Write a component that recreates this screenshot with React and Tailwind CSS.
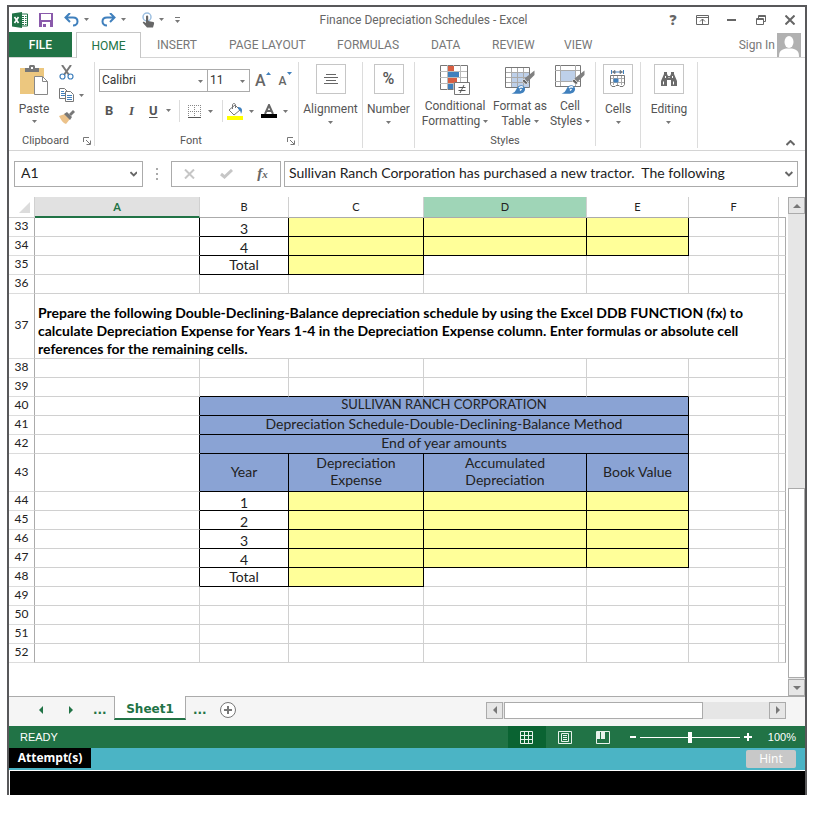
import { useState } from 'react';

const COLUMNS = [
  { name: 'A', width: '' },
  { name: 'B', width: 'w-[89px]' },
  { name: 'C', width: 'w-[135px]' },
  { name: 'D', width: 'w-[163px]' },
  { name: 'E', width: 'w-[102px]' },
  { name: 'F', width: 'w-[90px]' },
];

const INSTRUCTIONS =
  'Prepare the following Double-Declining-Balance depreciation schedule by using the Excel DDB FUNCTION (fx) to calculate Depreciation Expense for Years 1-4 in the Depreciation Expense column. Enter formulas or absolute cell references for the remaining cells.';

const ROWS = [
  { n: 33, kind: 'year', label: '3' },
  { n: 34, kind: 'year', label: '4' },
  { n: 35, kind: 'total' },
  { n: 36, kind: 'blank' },
  { n: 37, kind: 'note' },
  { n: 38, kind: 'blank' },
  { n: 39, kind: 'blank', aboveTable: true },
  { n: 40, kind: 'title', label: 'SULLIVAN RANCH CORPORATION' },
  { n: 41, kind: 'title', label: 'Depreciation Schedule-Double-Declining-Balance Method' },
  { n: 42, kind: 'title', label: 'End of year amounts' },
  { n: 43, kind: 'head' },
  { n: 44, kind: 'year', label: '1' },
  { n: 45, kind: 'year', label: '2' },
  { n: 46, kind: 'year', label: '3' },
  { n: 47, kind: 'year', label: '4' },
  { n: 48, kind: 'total' },
  { n: 49, kind: 'blank' },
  { n: 50, kind: 'blank' },
  { n: 51, kind: 'blank' },
  { n: 52, kind: 'blank' },
];

const plain = 'border-r border-b border-[#d0d0d0] p-0';
const black = 'border-r border-b border-black px-0 text-center';
const beforeTable = 'border-r border-b border-r-black border-b-[#d0d0d0] p-0';

function Caret({ className = '' }) {
  return (
    <svg viewBox="0 0 5 3" className={`h-[3px] w-[5px] shrink-0 fill-[#777] ${className}`}>
      <path d="M0 0h5L2.500 3z" />
    </svg>
  );
}

function Launcher() {
  return (
    <button aria-label="More options">
      <svg width="8" height="8" viewBox="0 0 8 8" fill="none" stroke="#777">
        <path d="M.5 5V.5H6M3 3l4 4M7.500 3.500v4h-4" />
      </svg>
    </button>
  );
}

function ExcelLogo() {
  return (
    <svg width="16" height="16" viewBox="0 0 16 16">
      <path d="M9 2h6.500v12H9z" fill="#fff" stroke="#217346" />
      <path d="M10 4.500h2M13 4.500h1.500M10 6.500h2M13 6.500h1.500M10 8.500h2M13 8.500h1.500M10 10.500h2M13 10.500h1.500M10 12.500h2M13 12.500h1.500" stroke="#217346" />
      <path d="M0 1.500 10 0v16L0 14.500z" fill="#217346" />
      <path d="m2.500 5 4 6M6.500 5l-4 6" stroke="#fff" strokeWidth="1.600" />
    </svg>
  );
}

function SaveIcon() {
  return (
    <svg width="14" height="14" viewBox="0 0 14 14">
      <path d="M0 0h14v14H0z" fill="#8a5aab" />
      <path d="M2 1h10v6H2zM3 9h8v5H3z" fill="#fff" />
      <path d="M4 11h3v3H4z" fill="#8a5aab" />
    </svg>
  );
}

function ArrowIcon({ flip }) {
  return (
    <svg width="15" height="14" viewBox="0 0 15 14" fill="none" stroke="#4080bd" strokeWidth="2" className={flip ? '-scale-x-100' : ''}>
      <path d="M6 0 1.500 4.500 6 9M2 4.500h7c3.500 0 4.500 2 4.500 4s-1.500 4-4.500 4" />
    </svg>
  );
}

function TouchIcon() {
  return (
    <svg width="13" height="16" viewBox="0 0 13 16">
      <circle cx="5" cy="5" r="4" fill="none" stroke="#9dbfe0" strokeWidth="1.500" />
      <path d="M4 4.500a1 1 0 0 1 2.200 0V9l5 1c1 .3 1 1 .8 2l-1 3.500H5L1 11c-.6-1 .3-1.700 1-1.200L4 11z" fill="#666" />
    </svg>
  );
}

function PasteIcon() {
  return (
    <svg width="29" height="31" viewBox="0 0 29 31">
      <path d="M0 3h24v26H0z" fill="#ecc77f" />
      <path d="M5 3h4V1.500C9 .7 9.700 0 10.500 0h3c.8 0 1.500.7 1.500 1.500V3h4v4H5z" fill="#777" />
      <path d="M11 2h2v2h-2z" fill="#fff" />
      <path d="M14.500 11.500h8l5 5v13h-13z" fill="#fff" stroke="#888" />
      <path d="M22.500 11.500v5h5" fill="none" stroke="#888" />
    </svg>
  );
}

function CutIcon() {
  return (
    <svg width="15" height="15" viewBox="0 0 15 15" fill="none">
      <path d="m3 0 7 10M12 0 5 10" stroke="#777" strokeWidth="2" />
      <circle cx="3.500" cy="11.500" r="2.500" stroke="#4080bd" strokeWidth="1.200" />
      <circle cx="11.500" cy="11.500" r="2.500" stroke="#4080bd" strokeWidth="1.200" />
    </svg>
  );
}

function CopyIcon() {
  return (
    <svg width="16" height="14" viewBox="0 0 16 14" fill="#fff" stroke="#777">
      <path d="M.5.5h5l3 3v7h-8z" />
      <path d="M2 3.500h3M2 5.500h5M2 7.500h5" stroke="#4080bd" />
      <path d="M6.500 3.500h5l3 3v7h-8z" />
      <path d="M8 7.500h5M8 9.500h5M8 11.500h5" stroke="#4080bd" />
    </svg>
  );
}

function BrushIcon() {
  return (
    <svg width="16" height="14" viewBox="0 0 16 14">
      <path d="m0 6 6-2 5 5-4 5c-3-1-5-4-7-8z" fill="#ecc28a" />
      <path d="m5 4 3-2 5 5-2 3z" fill="#777" />
      <path d="m10 4 4-4 2 2-4 4z" fill="#777" />
    </svg>
  );
}

function BordersIcon() {
  return (
    <svg width="13" height="13" viewBox="0 0 13 13" fill="none" stroke="#888">
      <path d="M0 .5h13M.5 0v13M12.500 0v13M6.500 0v13M0 6.500h13" strokeDasharray="1 1" />
      <path d="M0 12.500h13" stroke="#555" />
    </svg>
  );
}

function FillIcon() {
  return (
    <svg width="16" height="17" viewBox="0 0 16 17">
      <path d="m2 7 6-5 5 5-6 5z" fill="#fff" stroke="#777" />
      <path d="M5.500 6V2c0-2 3-2 3 0v3" fill="none" stroke="#777" />
      <path d="M11 4c4 0 5 3 3 7-.5-3-1-4-3-5z" fill="#4080bd" />
      <path d="M0 13h16v4H0z" fill="#ff0" />
    </svg>
  );
}

function FontColorIcon() {
  return (
    <svg width="16" height="14" viewBox="0 0 16 14">
      <path d="M4 10 8 1l4 9M5.500 7h5" fill="none" stroke="#666" strokeWidth="2" />
      <path d="M0 10h16v4H0z" />
    </svg>
  );
}

function ConditionalIcon() {
  return (
    <svg width="30" height="30" viewBox="0 0 30 30">
      <path d="M.5.5h27v24H.5z" fill="#fff" stroke="#777" />
      <path d="M0 6.500h27M0 12.500h27M0 18.500h27M7.500 0v25M13.500 0v25M20.500 0v25" stroke="#bbb" />
      <path d="M8 1h6v5H8zM8 13h9v5H8z" fill="#d75f43" />
      <path d="M8 7h11v5H8zM8 19h5v5H8z" fill="#4080bd" />
      <path d="M14.500 17.500h15v12h-15z" fill="#fff" stroke="#777" />
      <path d="M18.500 22.500h7M18.500 25.500h7M24 20l-4 8" stroke="#555" fill="none" />
    </svg>
  );
}

function PaintBrush() {
  return (
    <>
      <path d="M29.500 5.500V10l-7 7-3-3.500z" fill="#808080" />
      <path d="m19 14 4 4-2 1.500-4-3.500z" fill="#666" stroke="#fff" strokeWidth=".6" />
      <path d="M6.500 28.500c4-1 4-3 5.500-5.500 1.500-3 5-3.500 7-1.500s1 5-1 6.200c-3 1.500-7 1.300-11.500.8z" fill="#4080bd" />
      <path d="M14 23c1.500-2 3-1.500 4-.5M15 25.500l1.500-1.500" stroke="#fff" strokeWidth="1.500" fill="none" />
    </>
  );
}

function FormatTableIcon() {
  return (
    <svg width="30" height="30" viewBox="0 0 30 30">
      <path d="M.5 2.500h24v20H.5z" fill="#fff" />
      <path d="M7 8h17v14H7z" fill="#bed0e9" />
      <path d="M0 7.500h24M0 12.500h24M0 17.500h24M6.500 2v20M12.500 2v20M18.500 2v20" stroke="#aaa" />
      <path d="M.5 2.500h24v20H.5z" fill="none" stroke="#777" />
      <PaintBrush />
    </svg>
  );
}

function CellStylesIcon() {
  return (
    <svg width="30" height="30" viewBox="0 0 30 30">
      <path d="M.5.5h25v21H.5z" fill="#fff" stroke="#777" />
      <path d="M6 6h14v10H6z" fill="#bed0e9" />
      <path d="M0 5.500h25M0 16.500h25M5.500 0v21M20.500 0v21" stroke="#aaa" />
      <PaintBrush />
    </svg>
  );
}

function CellsIcon() {
  return (
    <svg width="16" height="18" viewBox="0 0 16 18" fill="none" stroke="#777">
      <path d="M1.500 0v4M13.500 0v4M4 2h7" stroke="#4080bd" />
      <path d="M2.500 2 5 .5v3zM12.500 2 10 .5v3z" fill="#4080bd" />
      <path d="M.5 5.500h14v9l-1.500 2h-3l-1-1h-3l-1 1H2l-1.500-2z" />
      <path d="M1 8.500h13M1 12.500h13M3.500 6v9M11.500 6v9M7.500 6v9" stroke="#aaa" />
      <path d="M4 9h4v3H4z" fill="#4080bd" stroke="#4080bd" />
    </svg>
  );
}

function BinocularsIcon() {
  return (
    <svg width="16" height="14" viewBox="0 0 16 14">
      <path d="M3 2V0h3v2l1 2h2l1-2V0h3v2l3 7v5h-6V8H6v6H0V9z" fill="#6b6b6b" />
      <path d="M2.500 9.500v3M12.500 9.500v3M4.500 4v2M11.500 4v2M7.500 5.500h1" stroke="#fff" />
    </svg>
  );
}

function WindowControls() {
  return (
    <div className="flex items-center text-[#666]">
      <button className="w-3 font-['Open_Sans',sans-serif] text-sm font-extrabold leading-4" aria-label="Help">?</button>
      <button className="ml-[17px]" aria-label="Ribbon display options">
        <svg width="13" height="10" viewBox="0 0 13 10" fill="none" stroke="currentColor">
          <path d="M.5.5h12v9H.5zM0 2.500h13M6.500 9V4M4 6.500 6.500 4 9 6.500" />
        </svg>
      </button>
      <button className="ml-[18px] h-4" aria-label="Minimize">
        <svg width="9" height="2" viewBox="0 0 9 2" fill="currentColor"><path d="M0 0h9v2H0z" /></svg>
      </button>
      <button className="ml-5" aria-label="Restore">
        <svg width="10" height="10" viewBox="0 0 10 10" fill="none" stroke="currentColor">
          <path d="M2.500 3V.5h7v6H7M2 1.500h8M.5 3.500h7v6h-7zM0 4.500h8" />
        </svg>
      </button>
      <button className="ml-[19px]" aria-label="Close">
        <svg width="10" height="10" viewBox="0 0 10 10" fill="none" stroke="currentColor" strokeWidth="2">
          <path d="m.5.5 9 9M9.500.5l-9 9" />
        </svg>
      </button>
    </div>
  );
}

function TitleBar() {
  return (
    <div className="flex h-[25px] items-center pl-[3px] pr-[10px]">
      <div className="flex items-center">
        <ExcelLogo />
        <button className="ml-[11px]" aria-label="Save"><SaveIcon /></button>
        <button className="ml-[11px] flex items-center gap-[5px]" aria-label="Undo"><ArrowIcon /><Caret /></button>
        <button className="ml-3 flex items-center gap-[5px]" aria-label="Redo"><ArrowIcon flip /><Caret /></button>
        <button className="ml-4 flex items-center gap-1" aria-label="Touch mode"><TouchIcon /><Caret /></button>
        <button className="ml-[11px] flex flex-col items-center gap-[2px]" aria-label="Customize toolbar">
          <span className="h-px w-[5px] bg-[#777]" />
          <Caret />
        </button>
      </div>
      <h1 className="flex-1 text-center text-xs text-[#666]">Finance Depreciation Schedules - Excel</h1>
      <WindowControls />
    </div>
  );
}

function Tabs() {
  return (
    <nav className="flex h-[26px] items-end border-b border-[#d4d4d4] text-xs text-[#777]">
      <a href="#file" className="flex h-[25px] w-[63px] items-center justify-center bg-[#217346] font-medium text-white">FILE</a>
      <a href="#home" className="-mb-px ml-1 flex h-[26px] w-[65px] items-center justify-center border border-b-0 border-[#c6c6c6] bg-white text-[#217346]">HOME</a>
      <div className="flex h-[25px] flex-1 items-center pl-4">
        <a href="#insert" className="w-[72px]">INSERT</a>
        <a href="#layout" className="w-[108px]">PAGE LAYOUT</a>
        <a href="#formulas" className="w-[94px]">FORMULAS</a>
        <a href="#data" className="w-[61px]">DATA</a>
        <a href="#review" className="w-[72px]">REVIEW</a>
        <a href="#view">VIEW</a>
      </div>
      <a href="#signin" className="mr-1 flex h-[25px] items-center gap-[2px]">
        Sign In
        <svg width="24" height="24" viewBox="0 0 24 24">
          <path d="M0 0h24v24H0z" fill="#b1b1b1" />
          <ellipse cx="12" cy="9" rx="4.500" ry="6" fill="#fff" />
          <path d="M2 24c0-6 2-7 7-8.500h6c5 1.500 7 2.500 7 8.500z" fill="#fff" />
        </svg>
      </a>
    </nav>
  );
}

function SmallGroup({ label, width, children }) {
  return (
    <section className={`flex h-[86px] flex-col items-center border-r border-[#dcdcdc] pt-[2px] ${width}`}>
      <button className="flex flex-col items-center">
        <span className="flex h-[30px] w-[30px] items-center justify-center border border-[#c6c6c6]">{children}</span>
        <span className="mt-[7px] leading-4">{label}</span>
        <Caret className="mt-1" />
      </button>
    </section>
  );
}

function StyleButton({ width, lines, children }) {
  return (
    <button className={`flex flex-col items-center leading-[15px] ${width}`}>
      <span className="mb-1 block">{children}</span>
      <span>{lines[0]}</span>
      <span className="flex items-center gap-[3px]">{lines[1]}<Caret /></span>
    </button>
  );
}

function Ribbon() {
  return (
    <div className="flex h-[93px] border-b border-[#d4d4d4] pt-1 text-xs text-[#555]">
      <section className="flex h-[84px] w-[86px] flex-col border-r border-[#dcdcdc] pt-[3px]">
        <div className="flex">
          <button className="flex w-[50px] flex-col items-center">
            <PasteIcon />
            <span className="mt-[5px] leading-4">Paste</span>
            <Caret className="mt-[3px]" />
          </button>
          <div className="flex flex-col gap-2">
            <button className="w-4" aria-label="Cut"><CutIcon /></button>
            <button className="flex items-center gap-1" aria-label="Copy"><CopyIcon /><Caret /></button>
            <button className="w-4" aria-label="Format painter"><BrushIcon /></button>
          </div>
        </div>
        <div className="mt-auto flex items-center justify-between pl-[13px] pr-[3px] text-[11px] leading-[10px]">
          Clipboard
          <Launcher />
        </div>
      </section>

      <section className="flex h-[84px] w-[204px] flex-col border-r border-[#dcdcdc] pl-1 pr-[3px] pt-[7px]">
        <div className="flex items-center text-xs text-[#333]">
          <label className="relative flex h-[23px] w-[109px] border border-[#ababab]">
            <select aria-label="Font" className="w-full appearance-none px-[2px] pb-[2px]"><option>Calibri</option></select>
            <Caret className="pointer-events-none absolute right-1 top-[10px]" />
          </label>
          <label className="relative -ml-px flex h-[23px] w-[43px] border border-[#ababab]">
            <select aria-label="Font size" className="w-full appearance-none px-[2px] pb-[2px]"><option>11</option></select>
            <Caret className="pointer-events-none absolute right-1 top-[10px]" />
          </label>
          <button className="ml-[5px] flex text-base font-medium leading-5 text-[#666]" aria-label="Grow font">
            A<Caret className="mt-px rotate-180 fill-[#4080bd]" />
          </button>
          <button className="ml-2 flex text-xs font-medium leading-5 text-[#666]" aria-label="Shrink font">
            A<Caret className="mt-px fill-[#4080bd]" />
          </button>
        </div>
        <div className="mt-2 flex h-[22px] items-center pl-[6px] text-[13px] text-[#555]">
          <button className="w-[22px] text-left font-bold">B</button>
          <button className="w-[22px] pl-[2px] text-left font-['Liberation_Serif',serif] font-bold italic">I</button>
          <button className="flex items-center gap-2 font-bold"><span className="underline underline-offset-2">U</span><Caret /></button>
          <span className="mx-2 h-full w-px bg-[#dcdcdc]" />
          <button className="flex items-center gap-[7px]" aria-label="Borders"><BordersIcon /><Caret /></button>
          <span className="ml-[9px] mr-1 h-full w-px bg-[#dcdcdc]" />
          <button className="flex items-center gap-[6px]" aria-label="Fill color"><FillIcon /><Caret /></button>
          <button className="ml-[7px] flex items-center gap-[6px]" aria-label="Font color"><FontColorIcon /><Caret /></button>
        </div>
        <div className="mt-auto flex items-center text-[11px] leading-[10px]">
          <span className="flex-1 pr-1 text-center">Font</span>
          <Launcher />
        </div>
      </section>

      <SmallGroup label="Alignment" width="w-16">
        <svg width="14" height="11" viewBox="0 0 14 11" stroke="#666">
          <path d="M2 .5h10M0 3.500h14M2 6.500h10M0 9.500h14" />
        </svg>
      </SmallGroup>
      <SmallGroup label="Number" width="w-[52px]"><span className="text-base font-medium">%</span></SmallGroup>

      <section className="flex h-[84px] w-[181px] flex-col border-r border-[#dcdcdc] pt-[3px]">
        <div className="flex pl-1">
          <StyleButton width="w-[72px]" lines={['Conditional', 'Formatting']}><ConditionalIcon /></StyleButton>
          <StyleButton width="w-[58px]" lines={['Format as', 'Table']}><FormatTableIcon /></StyleButton>
          <StyleButton width="w-[42px]" lines={['Cell', 'Styles']}><CellStylesIcon /></StyleButton>
        </div>
        <span className="mt-auto text-center text-[11px] leading-[10px]">Styles</span>
      </section>

      <SmallGroup label="Cells" width="w-[45px]"><CellsIcon /></SmallGroup>
      <SmallGroup label="Editing" width="w-[57px]"><BinocularsIcon /></SmallGroup>

      <div className="flex flex-1 items-end justify-end pb-1 pr-[10px]">
        <button aria-label="Collapse ribbon">
          <svg width="9" height="6" viewBox="0 0 9 6" fill="none" stroke="#666" strokeWidth="2"><path d="m.5 5 4-4 4 4" /></svg>
        </button>
      </div>
    </div>
  );
}

function Chevron() {
  return (
    <svg width="8" height="6" viewBox="0 0 8 6" fill="none" stroke="#666" strokeWidth="2"><path d="m.5 1 3.500 3.500L7.500 1" /></svg>
  );
}

function FormulaBar() {
  const [formula, setFormula] = useState('Sullivan Ranch Corporation has purchased a new tractor.\u00a0 The following');

  return (
    <div className="flex pl-[5px] pr-[7px] pt-[10px] font-[Lato,sans-serif] text-sm text-[#222]">
      <label className="flex h-[26px] w-[129px] items-center border border-[#ababab] pl-[6px] pr-[5px]">
        <input aria-label="Name box" defaultValue="A1" className="w-full min-w-0 pb-[2px] outline-none" />
        <Chevron />
      </label>
      <span className="flex w-7 flex-col items-center justify-center gap-[3px]">
        <i className="h-[2px] w-[2px] bg-[#aaa]" />
        <i className="h-[2px] w-[2px] bg-[#aaa]" />
        <i className="h-[2px] w-[2px] bg-[#aaa]" />
      </span>
      <div className="flex h-[26px] w-[110px] items-center justify-around border border-[#ababab]">
        <button aria-label="Cancel">
          <svg width="11" height="10" viewBox="0 0 11 10" stroke="#c6c6c6" strokeWidth="2"><path d="m1 .5 9 9M10 .5l-9 9" /></svg>
        </button>
        <button aria-label="Enter">
          <svg width="13" height="10" viewBox="0 0 13 10" fill="none" stroke="#c6c6c6" strokeWidth="3"><path d="m1 5 3.500 3L12 1" /></svg>
        </button>
        <button className="pb-[2px] font-['Liberation_Serif',serif] text-[15px] font-bold italic leading-4 text-[#666]" aria-label="Insert function">
          f<span className="text-[11px]">x</span>
        </button>
      </div>
      <label className="ml-[3px] flex h-[26px] min-w-0 flex-1 items-center border border-[#ababab] pl-1 pr-1">
        <input
          aria-label="Formula"
          value={formula}
          onChange={(e) => setFormula(e.target.value)}
          className="w-full min-w-0 pb-[2px] outline-none"
        />
        <Chevron />
      </label>
    </div>
  );
}

function Cells({ row }) {
  if (row.kind === 'note') {
    return (
      <td colSpan={6} className={`${plain} pl-[3px] pt-[10px] align-top font-bold leading-[18px] text-black`}>
        {INSTRUCTIONS}
      </td>
    );
  }

  if (row.kind === 'title') {
    return (
      <>
        <td className={beforeTable} />
        <td colSpan={4} className={`${black} bg-[#8aa3d4] pb-[3px] leading-[15px] ${row.n === 40 ? 'text-[13px]' : ''}`}>{row.label}</td>
        <td className={plain} />
      </>
    );
  }

  if (row.kind === 'head') {
    return (
      <>
        <td className={beforeTable} />
        {['Year', 'Depreciation Expense', 'Accumulated Depreciation', 'Book Value'].map((text) => (
          <td key={text} className={`border-r border-b border-black bg-[#8aa3d4] px-2 pb-[3px] text-center leading-[17px]`}>{text}</td>
        ))}
        <td className={plain} />
      </>
    );
  }

  if (row.kind === 'year') {
    return (
      <>
        <td className={beforeTable} />
        <td className={`${black} pt-[3px] leading-[15px]`}>{row.label}</td>
        <td className={`${black} bg-[#ffff99]`} />
        <td className={`${black} bg-[#ffff99]`} />
        <td className={`${black} bg-[#ffff99]`} />
        <td className={plain} />
      </>
    );
  }

  if (row.kind === 'total') {
    return (
      <>
        <td className={beforeTable} />
        <td className={`${black} py-0 leading-[18px]`}>Total</td>
        <td className={`${black} bg-[#ffff99]`} />
        <td className={plain} />
        <td className={plain} />
        <td className={plain} />
      </>
    );
  }

  return COLUMNS.map(({ name }) => (
    <td key={name} className={`${plain} ${row.aboveTable && name !== 'A' && name !== 'F' ? 'border-b-black' : ''}`} />
  ));
}

function rowHeight(kind) {
  if (kind === 'note') return 'h-[65px]';
  if (kind === 'head') return 'h-[38px]';
  return 'h-[19px]';
}

function headingStyle(name) {
  if (name === 'A') return 'border-b-2 border-b-[#217346] bg-[#e1e1e1] font-bold text-[#217346]';
  if (name === 'D') return 'border-b border-b-[#ababab] bg-[#9fd5b7] font-normal';
  return 'border-b border-b-[#ababab] font-normal';
}

function Sheet() {
  return (
    <div className="flex pt-[10px]">
      <div className="min-w-0 flex-1 pb-[33px]">
        <table className="w-full table-fixed border-separate border-spacing-0 font-[Lato,sans-serif] text-sm text-[#222]">
          <colgroup>
            <col className="w-[26px]" />
            {COLUMNS.map((c) => <col key={c.name} className={c.width} />)}
            <col className="w-[7px]" />
          </colgroup>
          <thead>
            <tr className="h-[21px] text-[11px] leading-[18px]">
              <th className="border-r border-b border-[#d0d0d0] p-0 pr-1">
                <svg width="11" height="11" viewBox="0 0 11 11" className="ml-auto"><path d="M11 0v11H0z" fill="#dcdcdc" /></svg>
              </th>
              {COLUMNS.map(({ name }) => (
                <th key={name} scope="col" className={`border-r border-r-[#d0d0d0] p-0 ${headingStyle(name)}`}>{name}</th>
              ))}
              <th className="border-b border-[#ababab] p-0" />
            </tr>
          </thead>
          <tbody>
            {ROWS.map((row) => (
              <tr key={row.n} className={rowHeight(row.kind)}>
                <th scope="row" className="border-r border-b border-r-[#ababab] border-b-[#dcdcdc] p-0 pb-[2px] text-xs font-normal leading-4">{row.n}</th>
                <Cells row={row} />
                <td className="border-r border-b border-r-[#ababab] border-b-[#d0d0d0] p-0" />
              </tr>
            ))}
          </tbody>
        </table>
      </div>
      <div className="ml-[2px] flex w-[17px] flex-col bg-[#e6e6e6]">
        <button className="flex h-[17px] items-center justify-center border border-[#ababab]" aria-label="Scroll up">
          <svg width="8" height="4" viewBox="0 0 8 4" fill="#777"><path d="M4 0l4 4H0z" /></svg>
        </button>
        <div className="flex-1" />
        <div className="h-[190px] border border-[#ababab] bg-white" />
        <button className="mt-px flex h-[17px] items-center justify-center border border-[#ababab]" aria-label="Scroll down">
          <svg width="8" height="4" viewBox="0 0 8 4" fill="#777"><path d="M4 4l4-4H0z" /></svg>
        </button>
      </div>
    </div>
  );
}

function SheetTabs() {
  return (
    <div className="flex h-[30px] bg-[#f5f5f5] font-['DejaVu_Sans',sans-serif] text-xs font-bold text-[#217346]">
      <div className="flex w-[105px] items-center border-t border-[#ababab] pb-1 pl-[30px]">
        <button aria-label="Previous sheet"><svg width="4" height="8" viewBox="0 0 4 8" fill="#217346"><path d="M4 0v8L0 4z" /></svg></button>
        <button className="ml-[26px]" aria-label="Next sheet"><svg width="4" height="8" viewBox="0 0 4 8" fill="#217346"><path d="M0 0v8l4-4z" /></svg></button>
        <button className="ml-5" aria-label="Earlier sheets">...</button>
      </div>
      <button className="h-6 w-[72px] border-x border-b-2 border-x-[#ababab] border-b-[#217346] bg-white pt-[3px]">Sheet1</button>
      <div className="flex flex-1 items-center border-t border-[#ababab] pb-[3px] pl-[7px]">
        <button aria-label="Later sheets">...</button>
        <button className="ml-[13px]" aria-label="New sheet">
          <svg width="16" height="16" viewBox="0 0 16 16" fill="#fff" stroke="#777">
            <circle cx="8" cy="8" r="7.500" />
            <path d="M4 8h8M8 4v8" strokeWidth="2" />
          </svg>
        </button>
        <div className="ml-auto mr-[19px] flex h-[17px] w-[300px] bg-[#e6e6e6]">
          <button className="flex w-[17px] items-center justify-center border border-[#ababab]" aria-label="Scroll left">
            <svg width="4" height="8" viewBox="0 0 4 8" fill="#777"><path d="M4 0v8L0 4z" /></svg>
          </button>
          <div className="ml-px w-[199px] border border-[#ababab] bg-white" />
          <button className="ml-auto flex w-[17px] items-center justify-center border border-[#ababab]" aria-label="Scroll right">
            <svg width="4" height="8" viewBox="0 0 4 8" fill="#777"><path d="M0 0v8l4-4z" /></svg>
          </button>
        </div>
      </div>
    </div>
  );
}

function StatusBar() {
  const [zoom, setZoom] = useState(100);

  return (
    <div className="flex h-[22px] items-center bg-[#217346] pl-[11px] pr-[9px] font-['Liberation_Sans',sans-serif] text-[11px] text-white">
      <span className="flex-1">READY</span>
      <button className="flex h-full w-[38px] items-center justify-center bg-[#0a6332]" aria-label="Normal view">
        <svg width="13" height="13" viewBox="0 0 13 13" fill="none" stroke="#e8f2ec">
          <path d="M.5.5h12v12H.5zM0 4.500h13M0 8.500h13M4.500 0v13M8.500 0v13" />
        </svg>
      </button>
      <button className="flex w-[38px] justify-center" aria-label="Page layout view">
        <svg width="14" height="13" viewBox="0 0 14 13" fill="none" stroke="#e8f2ec">
          <path d="M.5.5h13v12H.5zM3.500 2.500h7v8h-7zM5 4.500h4M5 6.500h4M5 8.500h4" />
        </svg>
      </button>
      <button className="flex w-[38px] justify-center" aria-label="Page break view">
        <svg width="14" height="13" viewBox="0 0 14 13" fill="none" stroke="#e8f2ec">
          <path d="M.5.5h13v12H.5z" />
          <path d="M1 1h3v7H1zM5 1h4v7H5z" fill="#e8f2ec" stroke="none" />
        </svg>
      </button>
      <button className="ml-2" aria-label="Zoom out">
        <svg width="6" height="8" viewBox="0 0 6 8" fill="#fff"><path d="M0 3h6v2H0z" /></svg>
      </button>
      <input
        type="range"
        aria-label="Zoom"
        min="0"
        max="200"
        value={zoom}
        onChange={(e) => setZoom(Number(e.target.value))}
        className="mx-1 h-px w-[100px] appearance-none bg-white [&::-webkit-slider-thumb]:h-[11px] [&::-webkit-slider-thumb]:w-1 [&::-webkit-slider-thumb]:appearance-none [&::-webkit-slider-thumb]:bg-white"
      />
      <button aria-label="Zoom in">
        <svg width="8" height="8" viewBox="0 0 8 8" fill="#fff"><path d="M0 3h8v2H0zM3 0h2v8H3z" /></svg>
      </button>
      <span className="ml-4">{zoom}%</span>
    </div>
  );
}

export default function App() {
  return (
    <div className="bg-white pb-[18px] pl-[7px] pr-[17px] pt-[5px] font-[Roboto,sans-serif]">
      <div className="border-2 border-b-0 border-[#58585a]">
        <TitleBar />
        <Tabs />
        <Ribbon />
        <FormulaBar />
        <Sheet />
        <SheetTabs />
        <StatusBar />
        <div className="flex h-[22px] items-start justify-between bg-[#4bb4c5] pr-[9px] font-['Open_Sans',sans-serif] text-xs text-white">
          <span className="flex h-5 w-[82px] items-center justify-center bg-black font-bold">Attempt(s)</span>
          <button className="mt-[2px] h-[18px] w-[50px] rounded-[2px] bg-[#c8c8c8]">Hint</button>
        </div>
        <div className="mt-px h-6 border-l border-white bg-black" />
      </div>
    </div>
  );
}
